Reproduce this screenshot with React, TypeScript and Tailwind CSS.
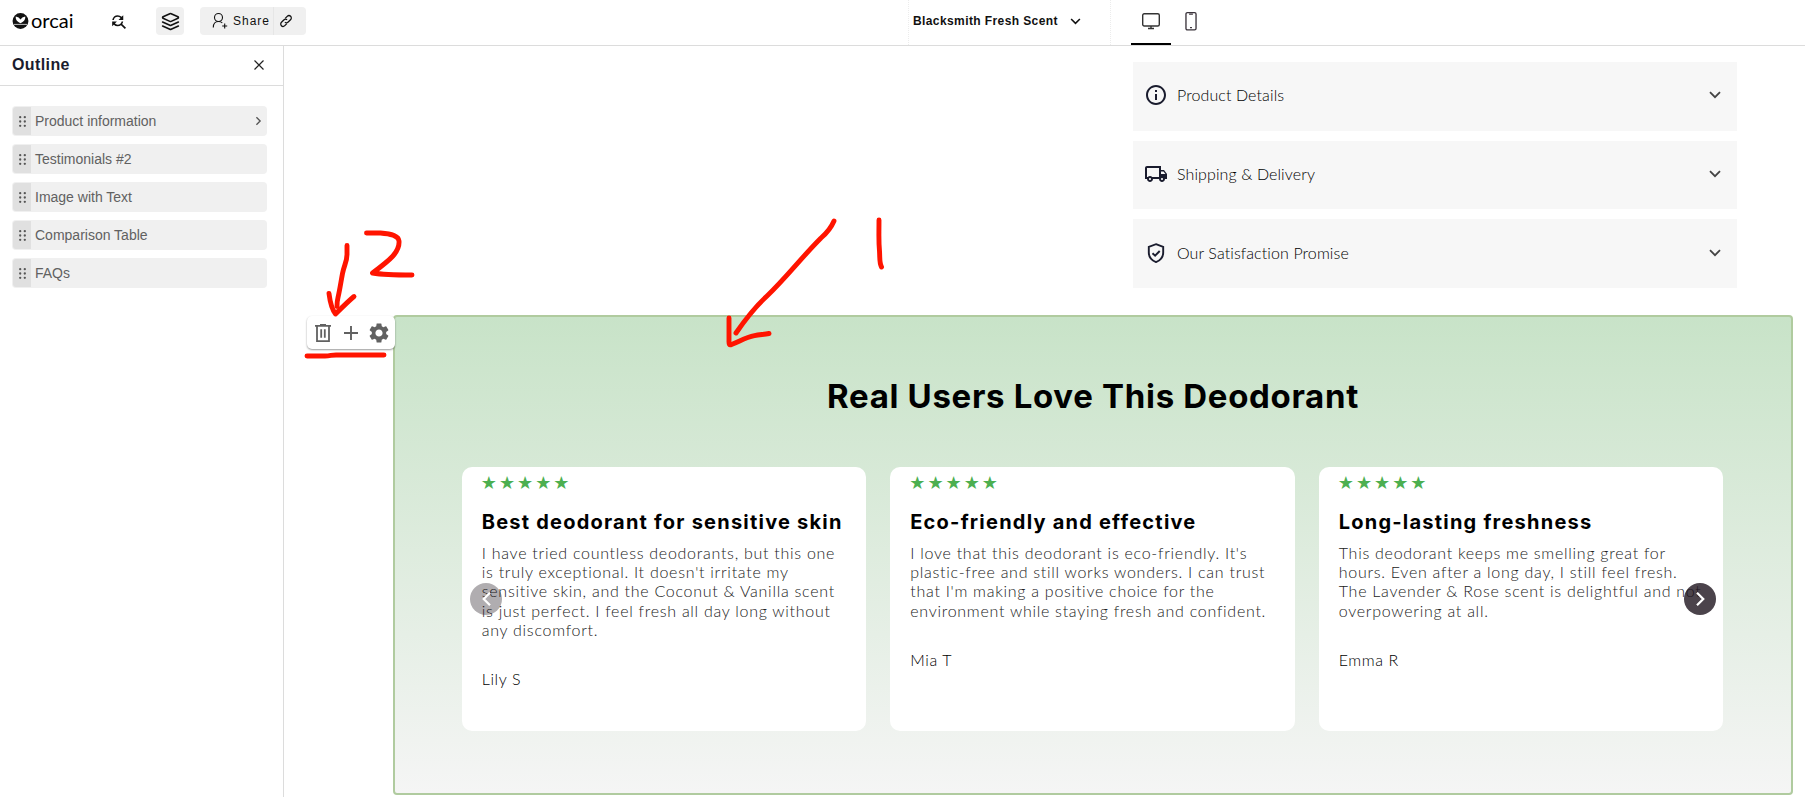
import type { ReactNode } from "react";
import { LuLayers } from "react-icons/lu";
import { MdFindReplace, MdInfoOutline, MdOutlineLocalShipping, MdSettings } from "react-icons/md";

const outline = ["Product information", "Testimonials #2", "Image with Text", "Comparison Table", "FAQs"];

const details = [
  { label: "Product Details", icon: <MdInfoOutline />, box: "h-[69px] pb-[3px]" },
  { label: "Shipping & Delivery", icon: <MdOutlineLocalShipping />, box: "h-[68px] pb-[2px]" },
  { label: "Our Satisfaction Promise", icon: <ShieldCheck />, box: "h-[69px] pb-[2px]" },
];

const reviews = [
  {
    title: "Best deodorant for sensitive skin",
    lines: [
      "I have tried countless deodorants, but this one",
      "is truly exceptional. It doesn't irritate my",
      "sensitive skin, and the Coconut & Vanilla scent",
      "is just perfect. I feel fresh all day long without",
      "any discomfort.",
    ],
    name: "Lily S",
  },
  {
    title: "Eco-friendly and effective",
    lines: [
      "I love that this deodorant is eco-friendly. It's",
      "plastic-free and still works wonders. I can trust",
      "that I'm making a positive choice for the",
      "environment while staying fresh and confident.",
    ],
    name: "Mia T",
  },
  {
    title: "Long-lasting freshness",
    lines: [
      "This deodorant keeps me smelling great for",
      "hours. Even after a long day, I still feel fresh.",
      "The Lavender & Rose scent is delightful and not",
      "overpowering at all.",
    ],
    name: "Emma R",
  },
];

function ShieldCheck() {
  return (
    <svg viewBox="0 0 24 24" className="size-6" fill="none" stroke="currentColor" strokeWidth="1.9">
      <path d="M12 3.200l7.200 2.600v5.700c0 4.600-3 8-7.200 9.600-4.200-1.600-7.200-5-7.200-9.600V5.800z" />
      <path d="M8.500 12.200l2.600 2.500 4.600-4.700" />
    </svg>
  );
}

function Chevron({ className }: { className: string }) {
  return (
    <svg viewBox="0 0 12 8" className={className} fill="none" stroke="currentColor" strokeWidth="1.800">
      <path d="M1 1.2l5 5 5-5" />
    </svg>
  );
}

function Header() {
  return (
    <header className="flex h-[46px] border-b border-[#dcdcdc]">
      <div className="flex w-[908px] items-start pt-[7px] pl-3">
        <div className="flex h-7 w-[61px] items-center gap-[2px]">
          <svg viewBox="0 0 18 18" className="h-[18px] w-[17px] shrink-0">
            <circle cx="9" cy="9" r="8.4" fill="#111" />
            <path d="M4 4.300L7 5.300 9 7.500 11 5.300l3-1c.3 3-.8 5-5 7.200C4.800 9.300 3.700 7.300 4 4.300z" fill="#fff" />
            <path d="M2 12.600h14" stroke="#ccc" strokeWidth="1" />
          </svg>
          <span className="pb-[3px] font-[Lato,sans-serif] text-[20px] leading-none text-black">orcai</span>
        </div>
        <MdFindReplace className="mt-[5px] ml-[36px] size-[19px]" />
        <div className="ml-7 grid size-7 place-items-center rounded bg-[#f0f0f0]">
          <LuLayers className="size-[19px]" />
        </div>
        <div className="ml-4 flex h-7 w-[106px] items-center rounded bg-[#f0f0f0]">
          <svg viewBox="0 0 16 18" className="ml-3 h-[18px] w-4" fill="none" stroke="currentColor" strokeWidth="1.1">
            <circle cx="6.500" cy="5.500" r="4" />
            <path d="M1.300 15.500c0-3.500 1.500-6 5.200-6 1.700 0 3 .5 3.800 1.500M12.700 11.500v5M10.200 14h5" />
          </svg>
          <span className="ml-[5px] w-10 text-[12px] tracking-[1px]">Share</span>
          <span className="h-full w-px bg-[#e6e6e6]" />
          <svg viewBox="0 0 14 14" className="ml-[5px] size-[14px]" fill="none" stroke="currentColor" strokeWidth="1.3">
            <path d="M6.200 4.400l2-2c1-1 2.500-1 3.400-.1s.9 2.400-.1 3.400L9.200 8c-1 1-2.400 1-3.300.1" />
            <path d="M7.800 9.600l-2 2c-1 1-2.500 1-3.400.1s-.9-2.400.1-3.400L4.800 6c1-1 2.400-1 3.300-.1" />
          </svg>
        </div>
      </div>
      <div className="flex w-[203px] items-start border-x border-dotted border-[#ececec] pt-[11px] pl-1">
        <span className="w-[157px] text-[12px] leading-5 font-bold tracking-[0.4px]">Blacksmith Fresh Scent</span>
        <Chevron className="mt-[7px] h-[7px] w-[11px]" />
      </div>
      <div className="ml-5 flex h-[45px] w-10 justify-center border-b-2 border-black pt-[13px]">
        <svg viewBox="0 0 18 17" className="h-[17px] w-[18px]" fill="none" stroke="#333" strokeWidth="1.4">
          <rect x=".7" y=".7" width="16.600" height="12.300" rx="1.500" />
          <path d="M9 13v2.500M6 15.500h6" />
        </svg>
      </div>
      <svg viewBox="0 0 12 20" className="mt-[12px] ml-[14px] h-[19px] w-3" fill="none" stroke="#3a333b" strokeWidth="1.400">
        <rect x=".7" y=".7" width="10.600" height="18.200" rx="1.500" />
        <path d="M4 2.300h4M5 16.500h2" />
      </svg>
    </header>
  );
}

function Sidebar() {
  return (
    <aside className="w-[284px] shrink-0 border-r border-[#dcdcdc]">
      <div className="flex h-10 justify-between border-b border-[#dcdcdc] pr-[19px] pl-3">
        <h2 className="pt-[7px] text-[16px] leading-6 font-bold tracking-[0.4px] text-[#1a1c2e]">Outline</h2>
        <svg viewBox="0 0 10 10" className="mt-[14px] size-[10px]" stroke="#222" strokeWidth="1.200">
          <path d="M.5.5l9 9M9.500.5l-9 9" />
        </svg>
      </div>
      <ul className="mt-5 ml-3 flex w-[255px] flex-col gap-2">
        {outline.map((item, i) => (
          <li key={item} className="flex h-[30px] items-center rounded bg-[#f0f0f0] p-px pr-1">
            <span className="grid h-full w-[18px] place-items-center rounded-l-[3px] bg-[#e0e0e0]">
              <svg viewBox="0 0 7 11" className="h-[11px] w-[7px]" fill="#555">
                {[1.2, 5.5, 9.8].map((y) => (
                  <g key={y}>
                    <circle cx="1.200" cy={y} r="1.150" />
                    <circle cx="5.800" cy={y} r="1.150" />
                  </g>
                ))}
              </svg>
            </span>
            <span className="ml-1 flex-1 text-[14px] leading-5 text-[#616161]">{item}</span>
            {i === 0 && <Chevron className="h-[6px] w-[9px] -rotate-90 text-[#555]" />}
          </li>
        ))}
      </ul>
    </aside>
  );
}

function Detail({ label, icon, box }: { label: string; icon: ReactNode; box: string }) {
  return (
    <div className={`flex items-center bg-[#f7f7f7] pr-4 pl-[11px] text-[#1a1c2e] ${box}`}>
      <span className="text-[24px]">{icon}</span>
      <span className="ml-[9px] flex-1 font-[Lato,sans-serif] text-[16px] leading-5 font-light tracking-[0.1px] text-black">
        {label}
      </span>
      <Chevron className="h-[8px] w-3 text-[#444]" />
    </div>
  );
}

function Testimonials() {
  return (
    <section className="relative mt-[27px] ml-[109px] h-[480px] w-[1400px] rounded border-2 border-[#b0cb9f] bg-linear-to-b from-[#c8e3c8] to-[#f5f5f5]">
      <h1 className="pt-[59px] text-center font-[Inter,sans-serif] text-[33px] leading-10 font-bold tracking-[0.680px] text-black">
        Real Users Love This Deodorant
      </h1>
      <div className="mt-[51px] flex justify-center gap-6 pr-[1px]">
        {reviews.map((r) => (
          <article key={r.title} className="h-[264px] w-[404.500px] rounded-[10px] bg-white pl-5 font-[Lato,sans-serif] whitespace-nowrap">
            <div className="-ml-px pt-[6px] font-['DejaVu_Sans',sans-serif] text-[18px] leading-5 tracking-[2px] text-[#4caf50]">★★★★★</div>
            <h3 className="mt-[17px] font-[Inter,sans-serif] text-[20px] leading-6 font-bold tracking-[1.220px] text-black">{r.title}</h3>
            <div className="mt-[9px] text-[16px] leading-[19.200px] font-light tracking-[0.730px] text-[#222]">
              {r.lines.map((line) => (
                <p key={line}>{line}</p>
              ))}
            </div>
            <p className="mt-[30px] text-[16px] leading-5 font-light tracking-[0.6px] text-black">{r.name}</p>
          </article>
        ))}
      </div>
      <button className="absolute top-[266px] left-[75px] grid size-8 place-items-center rounded-full bg-[#1e141e]/35">
        <Chevron className="h-[10px] w-[15px] rotate-90 text-white" />
      </button>
      <button className="absolute top-[266px] right-[75px] grid size-8 place-items-center rounded-full bg-[#1e141e]/80">
        <Chevron className="h-[10px] w-[15px] -rotate-90 text-white" />
      </button>
      <div className="absolute top-[-1px] left-[-88px] flex h-[33px] w-[88px] items-center rounded-[5px] bg-white pl-[8px] text-[#616161] shadow-[0_1px_2px_rgba(0,0,0,0.4)]">
        <svg viewBox="0 0 16 18" className="h-[18px] w-4" fill="none" stroke="currentColor" strokeWidth="1.800">
          <path d="M0 1.900h16M5 1h6M2 2v15.100h12V2M6.200 5.200v8.600M9.800 5.200v8.600" />
        </svg>
        <svg viewBox="0 0 14 14" className="ml-[13px] size-[14px]" stroke="currentColor" strokeWidth="1.900">
          <path d="M7 0v14M0 7h14" />
        </svg>
        <MdSettings className="ml-[9px] size-6" />
      </div>
    </section>
  );
}

// hand-drawn markup over the page
function Annotations() {
  return (
    <svg
      viewBox="0 0 1805 797"
      className="pointer-events-none absolute inset-0 h-[797px] w-[1805px]"
      fill="none"
      stroke="#ff1400"
      strokeWidth="4.900"
      strokeLinecap="round"
      strokeLinejoin="round"
    >
      <path d="M347 245.500v9c0 7-3 11-4.500 19s-3 18-4.500 24c-.8 3-1 6-1 9" />
      <path d="M329 293.500c1 8 3 16 6.500 20.500 7-7 13-13 18.500-17.500" />
      <path d="M366.500 233h14c12 1 18 3 18.500 8 1 11-9 19-26.500 32 12 2 26 2 39.500 2" />
      <path d="M307 356h18c6 0 6-1.200 12-1h47" />
      <path d="M834 221c-3 7-6 11-13 17-20 20-35 40-54 58-12 11-20 21-31 37" />
      <path d="M729 318v22.500c-.2 4 .5 5 2.500 4 9-3.500 14-7 23-8.800 5-1 9-1.200 14.500-2.200" />
      <path d="M879 220c0 17-.5 20 .5 31 .5 8-.2 12 2 16" />
    </svg>
  );
}

export default function App() {
  return (
    <div className="relative flex h-[797px] w-[1805px] flex-col overflow-hidden bg-white font-['Liberation_Sans',Arial,sans-serif] text-[#111]">
      <Header />
      <div className="flex flex-1">
        <Sidebar />
        <main className="min-w-0 flex-1 pt-4">
          <div className="mr-[68px] ml-auto flex w-[604px] flex-col gap-[10px]">
            {details.map((d) => (
              <Detail key={d.label} {...d} />
            ))}
          </div>
          <Testimonials />
        </main>
      </div>
      <Annotations />
    </div>
  );
}
